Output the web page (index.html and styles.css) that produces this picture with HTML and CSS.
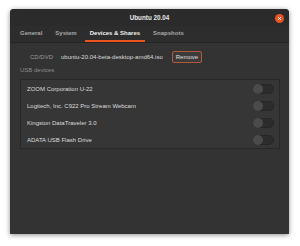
FILE: index.html
```html
<!DOCTYPE html>
<html lang="en">
<head>
    <meta charset="UTF-8">
    <meta name="viewport" content="width=device-width, initial-scale=1.0">
    <title>Ubuntu 20.04</title>
    <link rel="stylesheet" href="styles.css">
</head>
<body>
    <div class="window">
        <div class="titlebar">
            <span class="title">Ubuntu 20.04</span>
            <span class="close">
                <svg width="9" height="9" viewBox="0 0 9 9">
                    <circle cx="4.5" cy="4.5" r="4.5" fill="#e95420"/>
                    <path d="M3 3 L6 6 M6 3 L3 6" stroke="#fff" stroke-width="0.9"/>
                </svg>
            </span>
        </div>

        <div class="tabs">
            <span class="tab">General</span>
            <span class="tab">System</span>
            <span class="tab active">Devices &amp; Shares</span>
            <span class="tab">Snapshots</span>
        </div>

        <div class="content">
            <div class="cd-row">
                <span class="cd-label">CD/DVD</span>
                <span class="iso">ubuntu-20.04-beta-desktop-amd64.iso</span>
                <button class="remove">Remove</button>
            </div>

            <div class="section-label">USB devices</div>
            <div class="device-list">
                <div class="device"><span>ZOOM Corporation U-22</span><span class="switch"></span></div>
                <div class="device"><span>Logitech, Inc. C922 Pro Stream Webcam</span><span class="switch"></span></div>
                <div class="device"><span>Kingston DataTraveler 3.0</span><span class="switch"></span></div>
                <div class="device"><span>ADATA USB Flash Drive</span><span class="switch"></span></div>
            </div>
        </div>
    </div>
</body>
</html>
```

FILE: styles.css
```css
body {
    margin: 0;
    padding: 9px 11px 12px 10px;
    background-color: #ffffff;
    font-family: "Liberation Sans", Arial, sans-serif;
    font-size: 6px;
    color: #dcdcdc;
}

.window {
    height: 225px;
    background-color: #333333;
    border-radius: 4px 4px 0 0;
    box-shadow: 0 1px 5px rgba(0, 0, 0, 0.45);
    display: flex;
    flex-direction: column;
}

.titlebar {
    height: 17px;
    background-color: #2b2b2b;
    border-radius: 4px 4px 0 0;
    display: flex;
    align-items: center;
    justify-content: center;
    position: relative;
}

.title {
    font-weight: bold;
    font-size: 6.3px;
    color: #e8e8e8;
}

.close {
    position: absolute;
    right: 5px;
    top: 5px;
    height: 9px;
}

.tabs {
    height: 16px;
    background-color: #2d2d2d;
    border-bottom: 1px solid #242424;
    display: flex;
    padding-left: 5px;
}

.tab {
    padding: 0 5px;
    margin-right: 3px;
    display: flex;
    align-items: center;
    color: #a8a8a8;
    font-weight: bold;
    border-bottom: 2px solid transparent;
    box-sizing: border-box;
}

.tab.active {
    color: #f0f0f0;
    border-bottom-color: #e95420;
}

.content {
    padding: 8px 9px 0 10px;
}

.cd-row {
    display: flex;
    align-items: center;
    height: 12px;
}

.cd-label {
    width: 33px;
    text-align: right;
    color: #9a9a9a;
    margin-right: 8px;
}

.iso {
    color: #dcdcdc;
}

.remove {
    margin-left: 9px;
    height: 12px;
    padding: 0 3px;
    font-family: inherit;
    font-size: 6px;
    color: #e0e0e0;
    background-color: #3b3b3b;
    border: 1px solid #b05a3a;
    border-radius: 2px;
}

.section-label {
    margin-top: 3px;
    color: #8c8c8c;
    height: 9px;
    line-height: 9px;
}

.device-list {
    margin-top: 4px;
    background-color: #363636;
    border: 1px solid #282828;
}

.device {
    height: 17px;
    display: flex;
    align-items: center;
    justify-content: space-between;
    padding: 0 5px 0 6px;
}

.switch {
    width: 21px;
    height: 10px;
    border-radius: 5px;
    background-color: #2c2c2c;
    border: 1px solid #262626;
    box-sizing: border-box;
    position: relative;
}

.switch::before {
    content: "";
    position: absolute;
    left: -1px;
    top: -1px;
    width: 10px;
    height: 10px;
    border-radius: 50%;
    background-color: #4b4b4b;
}
```
